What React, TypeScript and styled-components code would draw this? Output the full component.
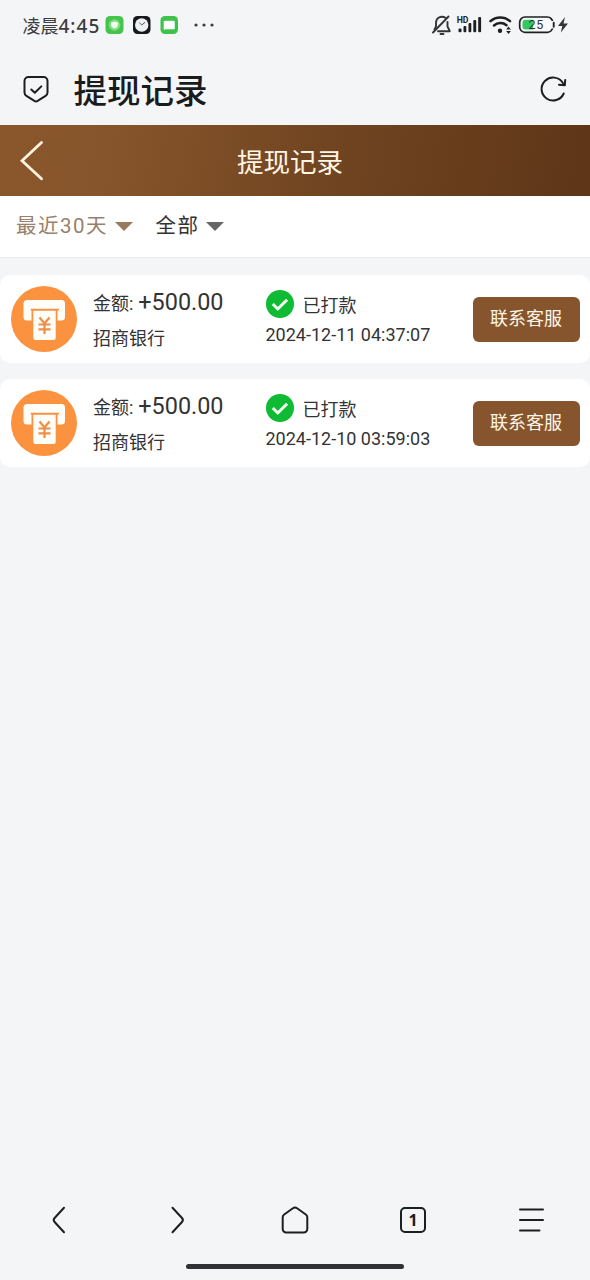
import React from 'react';
import styled, { createGlobalStyle } from 'styled-components';

const Global = createGlobalStyle`
  * { box-sizing: border-box; }
  body {
    margin: 0;
    background: #f4f5f7;
    font-family: Roboto, 'Noto Sans CJK SC', sans-serif;
    color: #333;
  }
  svg { display: block; flex: none; }
`;

const Screen = styled.div`
  width: 590px;
  height: 1280px;
  display: flex;
  flex-direction: column;
  overflow: hidden;
  background: #f4f5f7;
`;

const StatusBar = styled.div`
  height: 50px;
  padding: 0 21px 0 22.5px;
  display: flex;
  align-items: center;
  justify-content: space-between;
`;

const StatusGroup = styled.div`
  display: flex;
  align-items: center;
`;

const Clock = styled.div`
  width: 82.5px;
  padding-top: 2px;
  font-size: 18px;
  line-height: 24px;
  color: #3b3c3e;
  white-space: nowrap;
`;

const ClockDigits = styled.span`
  font-family: 'Noto Sans', sans-serif;
  font-size: 19px;
  font-weight: 500;
  letter-spacing: 1px;
`;

const BrowserBar = styled.div`
  height: 75px;
  padding: 3px 22px 0 22px;
  display: flex;
  align-items: center;
`;

const PageTitle = styled.div`
  flex: 1;
  margin-left: 23.5px;
  padding-top: 5px;
  font-size: 33.5px;
  line-height: 48px;
  font-weight: 500;
  color: #1a1b1d;
`;

const Header = styled.header`
  height: 71px;
  padding: 0 20px;
  display: grid;
  grid-template-columns: 24px 1fr 34px;
  align-items: center;
  background: linear-gradient(100deg, #8a572d 0%, #87552b 18%, #6d421f 62%, #5e3618 100%);
  color: #fff6e6;
`;

const HeaderTitle = styled.div`
  text-align: center;
  font-size: 26.5px;
  line-height: 40px;
  padding-top: 4px;
`;

const Filters = styled.div`
  height: 62px;
  padding: 0 16px 2px;
  display: flex;
  align-items: center;
  background: #fff;
  border-bottom: 1px solid #e9eaec;
`;

const Filter = styled.div<{ $active?: boolean }>`
  display: flex;
  align-items: center;
  font-size: 20.5px;
  line-height: 30px;
  letter-spacing: 1.5px;
  color: ${(p) => (p.$active ? '#98806a' : '#333')};
  margin-right: 23px;
`;

const Caret = styled.i<{ $color: string }>`
  width: 0;
  height: 0;
  margin: 2px 0 0 6.5px;
  border: 9.5px solid transparent;
  border-top-color: ${(p) => p.$color};
  border-bottom: 0;
`;

const List = styled.main`
  flex: 1;
  padding-top: 17px;
  display: flex;
  flex-direction: column;
  gap: 16px;
`;

const Card = styled.article`
  height: 88px;
  padding: 0 10px 0 11px;
  display: grid;
  grid-template-columns: 82px 172.5px 1fr 107px;
  align-items: center;
  background: #fff;
  border-radius: 10px;
`;

const Info = styled.div`
  display: flex;
  flex-direction: column;
  color: #333;
  white-space: nowrap;
`;

const Line = styled.div<{ $height: number }>`
  height: ${(p) => p.$height}px;
  display: flex;
  align-items: center;
  font-size: 18px;
`;

const AmountLine = styled.div`
  height: 36px;
  line-height: 38px;
  font-size: 18px;
`;

const Amount = styled.span`
  margin-left: 0.5px;
  font-size: 23.4px;
`;

const StatusText = styled.span`
  margin-left: 9px;
`;

const ContactButton = styled.button`
  height: 45px;
  padding: 0 1px 4px 0;
  border: 0;
  border-radius: 6px;
  background: #87552d;
  color: #fff6e6;
  font: inherit;
  font-size: 18px;
`;

const NavBar = styled.nav`
  height: 60px;
  display: grid;
  grid-template-columns: repeat(5, 1fr);
  align-items: center;
  justify-items: center;
`;

const HomeArea = styled.div`
  height: 30px;
  display: flex;
  justify-content: center;
  padding-top: 14px;
`;

const HomeIndicator = styled.div`
  width: 218px;
  height: 5px;
  border-radius: 3px;
  background: #303235;
`;

const AppIcons = () => (
  <svg width="112" height="20" viewBox="105 15 112 20">
    <rect x="105.5" y="16" width="18" height="18" rx="4.5" fill="#45c34b" />
    <circle cx="114.5" cy="25" r="5.8" fill="#7bdc80" />
    <path d="M114.5 21.5l3.500 1v2.500c0 1.800-1.800 3-3.500 3.700-1.700-.7-3.500-1.900-3.500-3.700v-2.500z" fill="#f1fff0" />
    <rect x="133" y="16" width="17.5" height="18" rx="4.5" fill="#17181b" />
    <circle cx="141.7" cy="25" r="6.7" fill="#eef1f4" />
    <path d="M139.2 22.5l2.500 2.500 3.500-2.800" fill="none" stroke="#55595d" strokeWidth="1" />
    <rect x="160.5" y="16" width="17.5" height="18" rx="4.5" fill="#3fc24a" />
    <path d="M164.2 21.3h10v7.500h-9l-1 .7z" fill="#fff" stroke="#fff" strokeLinejoin="round" />
    <g fill="#3b3c3e">
      <circle cx="196" cy="25" r="1.6" />
      <circle cx="204" cy="25" r="1.6" />
      <circle cx="212" cy="25" r="1.6" />
    </g>
  </svg>
);

const SystemIcons = () => (
  <svg width="138" height="24" viewBox="431 13 138 24">
    <g fill="none" stroke="#343537" strokeWidth="1.9" strokeLinecap="round" strokeLinejoin="round">
      <path d="M446 18c-5.500-3-10 0-10 5v3.500l-1.500 3M447.500 22v4.500l2.300 4.700H438" />
      <path d="M433 32.500l15.500-16" />
      <path d="M440.500 34h3" />
    </g>
    <text x="456.7" y="23" fontSize="9.8" fontWeight="700" fill="#222" textLength="11.8" lengthAdjust="spacingAndGlyphs">HD</text>
    <g fill="#1e1f21">
      <rect x="458.5" y="28.5" width="3" height="3.8" rx="1" />
      <rect x="463.5" y="26" width="2.8" height="6.3" rx="1" />
      <rect x="468.5" y="23" width="2.8" height="9.300" rx="1" />
      <rect x="473.3" y="20" width="2.9" height="12.3" rx="1" />
      <rect x="478.2" y="17" width="2.9" height="15.3" rx="1" />
    </g>
    <g fill="none" stroke="#1e1f21" strokeWidth="2.5" strokeLinecap="round">
      <path d="M490.5 21.200c5.500-5 14-5 19.500 0" />
      <path d="M494 25.500c3.700-3.200 9-3.200 12.500-.3" />
    </g>
    <circle cx="500" cy="30.7" r="2.200" fill="#1e1f21" />
    <path d="M508.500 26.500l2.300 3h-4.600zM508.500 34l2.300-3h-4.600z" fill="#1e1f21" />
    <rect x="519.7" y="17" width="33" height="15.3" rx="5.3" fill="#f9fafb" stroke="#1e1f21" strokeWidth="1.7" />
    <path d="M525.500 19.800h7.500v9.800h-7.500a3 3 0 0 1-3-3v-3.800a3 3 0 0 1 3-3z" fill="#33c95f" />
    <path d="M552.500 21v7.400" stroke="#f9fafb" strokeWidth="3.5" />
    <path d="M553.700 22.800v4" stroke="#1e1f21" strokeWidth="1.9" strokeLinecap="round" />
    <text x="528.5" y="29.3" fontSize="12.5" fill="#333" letterSpacing="0.6">25</text>
    <path d="M565 17l-7 9h4.300l-1.500 6.500 7.200-9h-4.500z" fill="#343537" />
  </svg>
);

const ShieldIcon = () => (
  <svg width="28" height="30" viewBox="22 74 28 30" fill="none" stroke="#1d1e20" strokeWidth="2" strokeLinecap="round" strokeLinejoin="round">
    <path d="M28.500 77h15a4 4 0 0 1 4 4v11.500a4 4 0 0 1-1.900 3.400l-7.600 4.800a3.500 3.500 0 0 1-4 0l-7.600-4.800a4 4 0 0 1-1.900-3.400V81a4 4 0 0 1 4-4z" />
    <path d="M31.300 89.500l3.500 3.300 6.500-6.400" />
  </svg>
);

const ReloadIcon = () => (
  <svg width="28" height="28" viewBox="540 75 28 28" fill="none" stroke="#1d1e20" strokeWidth="2" strokeLinecap="round" strokeLinejoin="round">
    <path d="M563.700 93.500a11.500 11.500 0 1 1-.8-10.500l1.600 2" />
    <path d="M559 84.800l5.800.4.400-5.200" />
  </svg>
);

const BackIcon = () => (
  <svg width="24" height="42" viewBox="0 0 24 42" fill="none" stroke="#fff3df" strokeWidth="2.8" strokeLinecap="round">
    <path d="M21.500 2.500L2 20.800l19.500 18" strokeLinejoin="miter" />
  </svg>
);

const WithdrawIcon = () => (
  <svg width="66" height="66" viewBox="0 0 66 66">
    <circle cx="33" cy="33" r="33" fill="#fb9240" />
    <rect x="12.5" y="14" width="41.5" height="20.5" rx="3.5" fill="#fffdf8" />
    <path d="M19.700 22.800h28.300v1.700h-1.500v11h-26v-11h-.8z" fill="#fb9240" />
    <path d="M22.300 24.800h22.400v26.700a2.500 2.500 0 0 1-2.500 2.500H24.800a2.500 2.500 0 0 1-2.500-2.500z" fill="#fffdf8" />
    <path d="M28.500 31.500l5 6 5-6M27.500 38.500h12M27.500 43.300h12M33.500 37.500v10.500" fill="none" stroke="#ee8f45" strokeWidth="2.2" />
  </svg>
);

const PaidIcon = () => (
  <svg width="28" height="29" viewBox="0 0 28 29">
    <circle cx="14" cy="15" r="14" fill="#0fbb32" />
    <path d="M6.800 15l5 5 9.300-9.300" fill="none" stroke="#f6fff4" strokeWidth="3" />
  </svg>
);

const navStroke = { fill: 'none', stroke: '#1d1e20', strokeWidth: 2, strokeLinecap: 'round', strokeLinejoin: 'round' } as const;

const records = [
  { amount: '+500.00', bank: '招商银行', status: '已打款', time: '2024-12-11 04:37:07' },
  { amount: '+500.00', bank: '招商银行', status: '已打款', time: '2024-12-10 03:59:03' },
];

export default function App() {
  return (
    <Screen>
      <Global />
      <StatusBar>
        <StatusGroup>
          <Clock>凌晨<ClockDigits>4:45</ClockDigits></Clock>
          <AppIcons />
        </StatusGroup>
        <SystemIcons />
      </StatusBar>
      <BrowserBar>
        <ShieldIcon />
        <PageTitle>提现记录</PageTitle>
        <ReloadIcon />
      </BrowserBar>
      <Header>
        <BackIcon />
        <HeaderTitle>提现记录</HeaderTitle>
      </Header>
      <Filters>
        <Filter $active>最近30天<Caret $color="#98795c" /></Filter>
        <Filter>全部<Caret $color="#666" /></Filter>
      </Filters>
      <List>
        {records.map((r) => (
          <Card key={r.time}>
            <WithdrawIcon />
            <Info>
              <AmountLine>金额: <Amount>{r.amount}</Amount></AmountLine>
              <Line $height={36}>{r.bank}</Line>
            </Info>
            <Info>
              <Line $height={31}><PaidIcon /><StatusText>{r.status}</StatusText></Line>
              <Line $height={31}>{r.time}</Line>
            </Info>
            <ContactButton>联系客服</ContactButton>
          </Card>
        ))}
      </List>
      <NavBar>
        <svg width="28" height="30" viewBox="0 0 28 30" {...navStroke}>
          <path d="M19 2.800L9.600 13a3 3 0 0 0 0 4L19 27.200" />
        </svg>
        <svg width="28" height="30" viewBox="0 0 28 30" {...navStroke}>
          <path d="M9.500 2.800L19 13a3 3 0 0 1 0 4L9.500 27.200" />
        </svg>
        <svg width="28" height="30" viewBox="0 0 28 30" {...navStroke}>
          <path d="M11.900 3.300a3.500 3.500 0 0 1 4.200 0l8.700 6.200a3.500 3.500 0 0 1 1.500 2.800V24a3.500 3.500 0 0 1-3.500 3.500H5.200A3.500 3.500 0 0 1 1.700 24V12.300a3.500 3.500 0 0 1 1.500-2.800z" />
        </svg>
        <svg width="28" height="30" viewBox="0 0 28 30">
          <rect x="2" y="3" width="24" height="24" rx="4" {...navStroke} />
          <text x="14" y="20.5" textAnchor="middle" fontFamily="Noto Sans" fontSize="16" fontWeight="700" fill="#1d1e20">1</text>
        </svg>
        <svg width="28" height="30" viewBox="0 0 28 30" {...navStroke}>
          <path d="M3 4.500h23M3 15h23M3 25.500h19.500" />
        </svg>
      </NavBar>
      <HomeArea><HomeIndicator /></HomeArea>
    </Screen>
  );
}
